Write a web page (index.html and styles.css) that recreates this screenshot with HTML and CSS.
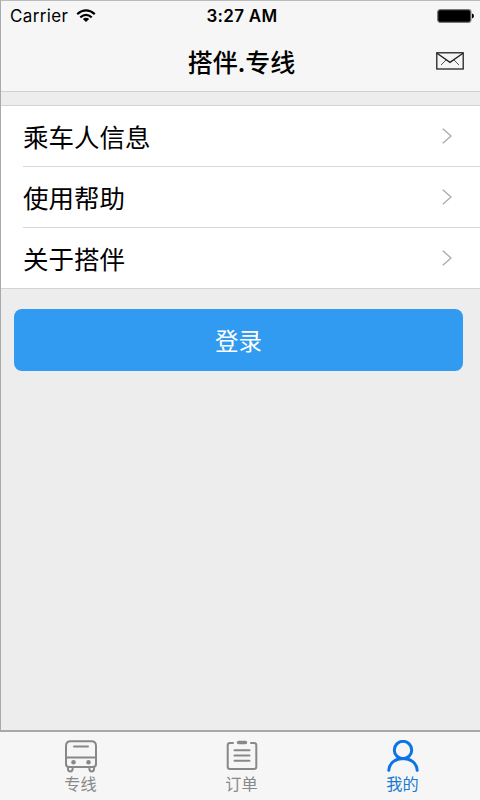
FILE: index.html
```html
<!DOCTYPE html>
<html lang="zh-CN">
<head>
<meta charset="utf-8">
<title>搭伴.专线</title>
<link rel="stylesheet" href="styles.css">
</head>
<body>
<div class="screen">
  <header class="header">
    <div class="status">
      <div class="carrier"><span>Carrier</span>
        <svg width="20" height="14" viewBox="0 0 20 14" fill="none" stroke="#000" stroke-width="2.2"><path d="M1.2 5.1Q10-2.2 18.8 5.1M4.3 8.3Q10 3.5 15.7 8.3"/><path d="M10 13.1 6.8 10Q10 7.6 13.2 10Z" fill="#000" stroke="none"/></svg>
      </div>
      <div class="time">3:27 AM</div>
      <svg class="battery" width="37" height="14" viewBox="0 0 37 14"><rect x=".7" y=".7" width="33.2" height="12.6" rx="2.5" fill="#000" stroke="#777" stroke-width="1.2"/><path d="M35 4.6q2 .4 2 2.4t-2 2.4z"/></svg>
    </div>
    <div class="nav">
      <h1>搭伴.专线</h1>
      <svg class="mail" width="28" height="18" viewBox="0 0 28 18" fill="none" stroke="#222" stroke-width="1.3"><rect x=".8" y=".8" width="26.4" height="16.2"/><path d="M1 1.2 14 10.4 27 1.2"/><path d="M5 13 10 8M23 13 18 8" stroke="#555" stroke-width="1"/></svg>
    </div>
  </header>
  <main class="content">
    <ul class="list">
      <li><span>乘车人信息</span><svg width="10" height="16" viewBox="0 0 10 16"><path d="M.8.8 9 8 .8 15.2"/></svg></li>
      <li><span>使用帮助</span><svg width="10" height="16" viewBox="0 0 10 16"><path d="M.8.8 9 8 .8 15.2"/></svg></li>
      <li><span>关于搭伴</span><svg width="10" height="16" viewBox="0 0 10 16"><path d="M.8.8 9 8 .8 15.2"/></svg></li>
    </ul>
    <button class="login">登录</button>
  </main>
  <nav class="tabs">
    <a class="tab"><svg width="34" height="33" viewBox="0 0 34 33" fill="none" stroke="#888" stroke-width="2" stroke-linecap="round" stroke-linejoin="round"><path d="M6.5 1.2h21Q32 1.2 32 6v18q0 3-3 3H5q-3 0-3-3V6q0-4.8 4.500-4.800ZM2 17.500h30M10 6.500h14"/><path d="M4 27.500v1.500q0 2.400 2.300 2.400T8.600 29v-1.500M25.400 27.500v1.500q0 2.400 2.300 2.400T30 29v-1.500"/><circle cx="9.500" cy="22.300" r="1.300" fill="#888"/><circle cx="24.500" cy="22.300" r="1.300" fill="#888"/></svg><span>专线</span></a>
    <a class="tab"><svg width="34" height="33" viewBox="0 0 34 33" fill="none" stroke="#888" stroke-width="2" stroke-linecap="round"><path d="M8 3H5Q2.700 3 2.700 5.300v21.400Q2.700 29 5 29h24q2.300 0 2.300-2.300V5.300Q31.300 3 29 3h-3"/><path d="M13.500 2.500h7" stroke-width="3.300"/><path d="M9.500 10.300h15M9.500 15.500h15M9.500 20.700h15"/></svg><span>订单</span></a>
    <a class="tab active"><svg width="34" height="33" viewBox="0 0 34 33" fill="none" stroke="#0b75e6" stroke-width="3" stroke-linecap="round"><circle cx="17" cy="10" r="8.700"/><path d="M2.800 30.300C4 14.500 30 14.500 31.200 30.300"/></svg><span>我的</span></a>
  </nav>
</div>
</body>
</html>
```
FILE: styles.css
```css
* { box-sizing: border-box; }
body { margin: 0; font-family: "Noto Sans CJK SC", sans-serif; color: #000; }
.screen { height: 800px; display: flex; flex-direction: column; background: #ededed; border-left: 1px solid #aaa; border-top: 1px solid #bbb; }
.header { height: 91px; background: #f6f6f6; border-bottom: 1px solid #d0d0d0; }
.status { height: 29px; display: grid; grid-template-columns: 1fr auto 1fr; align-items: center; padding: 0 6px 0 9px; font: 17px/28px Inter, sans-serif; }
.carrier { display: flex; align-items: center; gap: 8px; letter-spacing: .35px; }
.time { font-weight: 600; letter-spacing: .3px; }
.battery { justify-self: end; }
.nav { height: 61px; display: grid; grid-template-columns: 1fr auto 1fr; align-items: center; padding: 0 16px 0 18px; }
.nav h1 { grid-column: 2; margin: 0; font-size: 25px; line-height: 58px; font-weight: 500; }
.mail { justify-self: end; }
.content { flex: 1; padding-top: 13px; }
.list { list-style: none; margin: 0; padding: 0 0 0 22px; background: #fff; border-top: 1px solid #d3d3d3; border-bottom: 1px solid #d3d3d3; }
.list li { height: 61px; display: flex; align-items: center; justify-content: space-between; padding-right: 28px; border-bottom: 1px solid #d8d8d8; font-size: 25.5px; line-height: 60px; }
.list li:last-child { border-bottom: 0; height: 60px; }
.list svg { fill: none; stroke: #aaa; stroke-width: 1.3; }
.login { display: block; width: 449px; height: 62px; margin: 20px 0 0 13px; padding: 0; border: 0; border-radius: 8px; background: #309bf0; color: #fff; font: 23.500px/60px "Noto Sans CJK SC", sans-serif; }
.tabs { height: 70px; display: grid; grid-template-columns: repeat(3, 161px); margin-left: -1px; border-top: 2px solid #a8a8a8; background: #f6f6f6; }
.tab { display: flex; flex-direction: column; align-items: center; padding-top: 8px; color: #888; font-size: 16.200px; line-height: 20px; }
.active { color: #197ad0; }
```
